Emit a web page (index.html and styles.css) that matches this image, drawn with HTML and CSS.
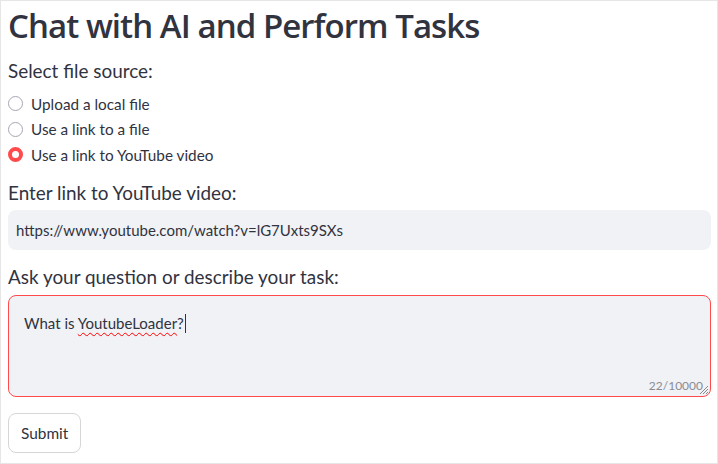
FILE: index.html
```html
<!DOCTYPE html>
<html>
<head>
<meta charset="utf-8">
<link rel="stylesheet" href="styles.css">
</head>
<body>
<div class="frame">
  <h1 class="title">Chat with AI and Perform Tasks</h1>
  <div class="label label-source">Select file source:</div>
  <div class="radios">
    <div class="radio"><span class="dot"></span><span>Upload a local file</span></div>
    <div class="radio"><span class="dot"></span><span>Use a link to a file</span></div>
    <div class="radio"><span class="dot on"></span><span>Use a link to YouTube video</span></div>
  </div>
  <div class="label label-link">Enter link to YouTube video:</div>
  <div class="input">https://www.youtube.com/watch?v=lG7Uxts9SXs</div>
  <div class="label label-ask">Ask your question or describe your task:</div>
  <div class="textarea">
    <div class="ta-text">What is <span class="misspelt">YoutubeLoader</span>?<span class="caret"></span></div>
    <div class="counter">22/10000</div>
    <svg class="grip" width="10" height="10" viewBox="0 0 10 10"><path d="M9 1L1 9M9 4L4 9M9 7L7 9" stroke="#8a8a8a" stroke-width="1"/></svg>
  </div>
  <button class="btn">Submit</button>
</div>
</body>
</html>
```
FILE: styles.css
```css
html, body { margin: 0; padding: 0; background: #fff; }
.frame {
  box-sizing: border-box;
  width: 718px;
  height: 464px;
  border: 1px solid #e6e6e6;
  padding: 0 6px 0 7px;
  display: flex;
  flex-direction: column;
  align-items: flex-start;
  color: #31333f;
  font-family: "Lato", sans-serif;
}
.title {
  margin: 3px 0 0 0;
  font-family: "Open Sans", sans-serif;
  font-weight: 600;
  font-size: 33px;
  line-height: 44px;
  letter-spacing: -0.95px;
  color: #31333f;
}
.label {
  font-family: "Lato", sans-serif;
  font-size: 18.9px;
  line-height: 24px;
}
.label-source { margin-top: 11px; }
.radios { display: flex; flex-direction: column; margin-top: 8px; }
.radio {
  display: flex; align-items: center; gap: 8px;
  height: 25.5px;
  font-family: "Lato", sans-serif;
  font-size: 15.3px;
}
.dot {
  box-sizing: border-box;
  width: 15px; height: 15px; border-radius: 50%;
  border: 1px solid #a3a8b4;
  background: #fff;
}
.dot.on { border: 4.5px solid #ff4b4b; }
.label-link { margin-top: 13px; }
.input {
  box-sizing: border-box;
  width: 100%;
  height: 40px;
  margin-top: 5px;
  background: #f0f2f6;
  border-radius: 8px;
  padding: 0 8px;
  display: flex; align-items: center;
  font-family: "Lato", sans-serif;
  font-size: 15px;
}
.label-ask { margin-top: 15px; }
.textarea {
  box-sizing: border-box;
  position: relative;
  width: 100%;
  height: 102px;
  margin-top: 6px;
  background: #f0f2f6;
  border: 1px solid #ff4b4b;
  border-radius: 8px;
  padding: 16px 15px;
  font-family: "Lato", sans-serif;
  font-size: 15px;
}
.ta-text { line-height: 22px; }
.misspelt { text-decoration: underline wavy #f00; text-decoration-thickness: 1px; text-underline-offset: 3px; }
.caret { display: inline-block; width: 1px; height: 19px; background: #31333f; vertical-align: -4px; margin-left: 1px; }
.counter {
  position: absolute; right: 7px; bottom: 3px;
  font-size: 12px; color: #8a8c94;
}
.grip { position: absolute; right: 1px; bottom: 1px; }
.btn {
  margin-top: 16px;
  box-sizing: border-box;
  height: 40px;
  padding: 0 12px;
  background: #fff;
  border: 1px solid #d6d6d9;
  border-radius: 8px;
  font-family: "Lato", sans-serif;
  font-size: 15.4px;
  color: #31333f;
}
```
